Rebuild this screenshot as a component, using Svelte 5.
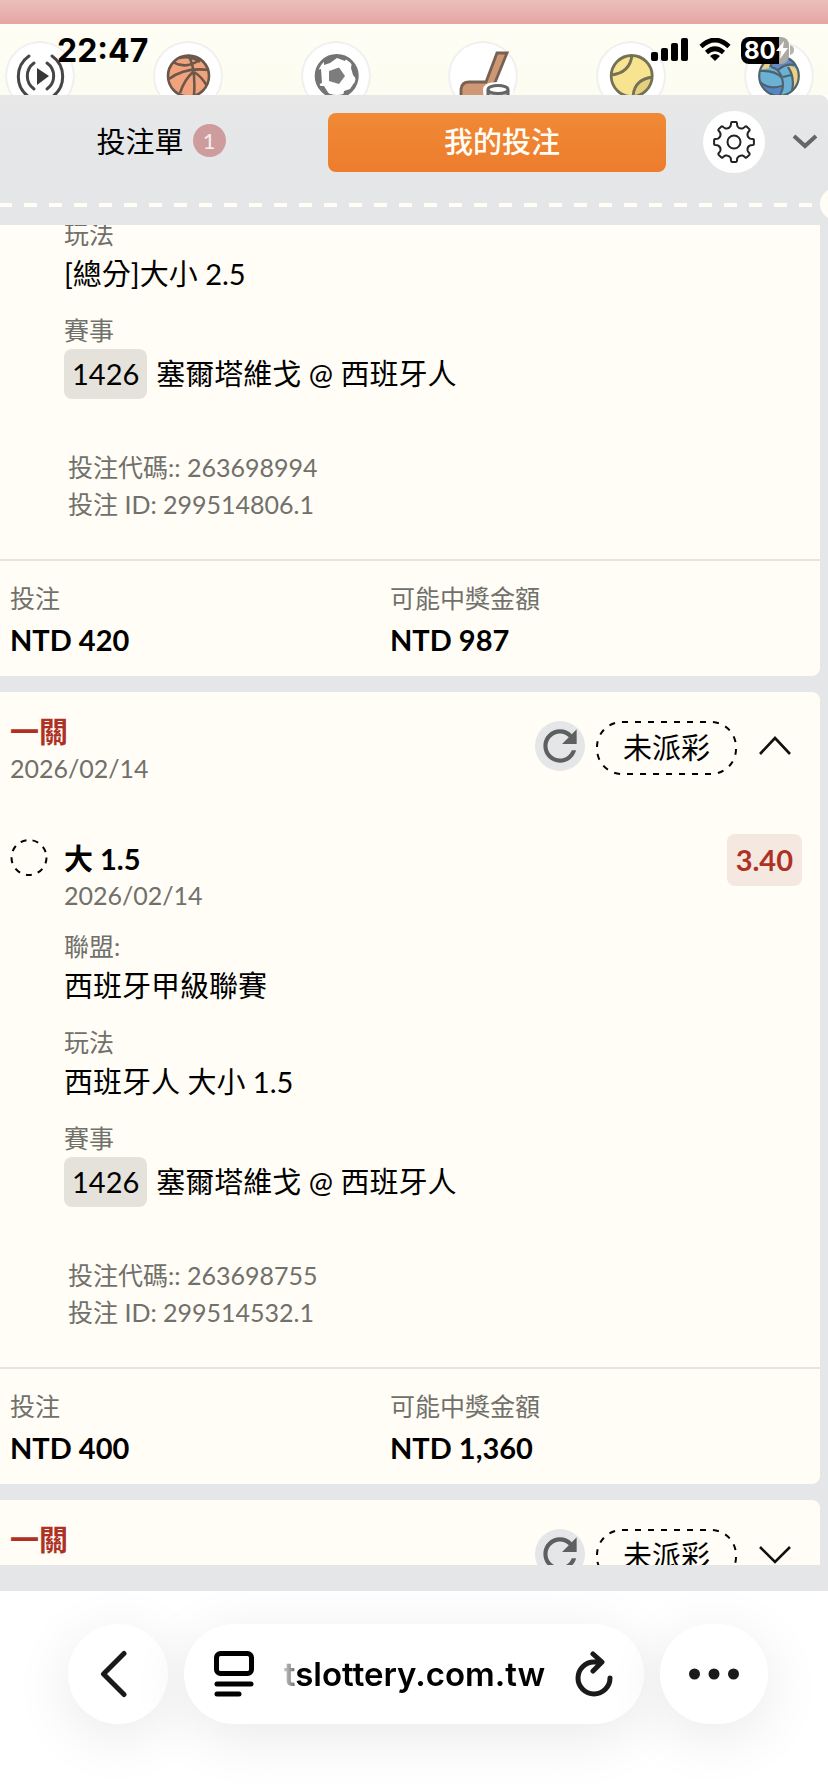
<script lang="ts">
	interface Field {
		label: string,
		value: string,
		code?: string,
	}

	interface Slip {
		title?: string,
		date?: string,
		open: boolean,
		pick?: { name: string, date: string, odds: string },
		fields: Field[],
		betCode?: string,
		betId?: string,
		stake?: string,
		payout?: string,
	}

	const sports = ['live', 'basketball', 'soccer', 'hockey', 'tennis', 'volleyball'];

	const slips: Slip[] = [
		{
			open: true,
			fields: [
				{ label: '玩法', value: '[總分]大小 2.5' },
				{ label: '賽事', value: '塞爾塔維戈 @ 西班牙人', code: '1426' },
			],
			betCode: '263698994',
			betId: '299514806.1',
			stake: 'NTD 420',
			payout: 'NTD 987',
		},
		{
			title: '一關',
			date: '2026/02/14',
			open: true,
			pick: { name: '大 1.5', date: '2026/02/14', odds: '3.40' },
			fields: [
				{ label: '聯盟:', value: '西班牙甲級聯賽' },
				{ label: '玩法', value: '西班牙人 大小 1.5' },
				{ label: '賽事', value: '塞爾塔維戈 @ 西班牙人', code: '1426' },
			],
			betCode: '263698755',
			betId: '299514532.1',
			stake: 'NTD 400',
			payout: 'NTD 1,360',
		},
		{ title: '一關', open: false, fields: [] },
	];

	// eight teeth around a 44px box
	const polar = (radius: number, degrees: number) => {
		const a = (degrees * Math.PI) / 180;
		return `${(22 + radius * Math.cos(a)).toFixed(2)} ${(22 + radius * Math.sin(a)).toFixed(2)}`;
	};
	const gearPath = Array.from({ length: 8 }, (_, i) => {
		const a = i * 45 - 90;
		return `${i ? 'L' : 'M'}${polar(16, a - 13)} Q${polar(17, a - 10)} ${polar(19, a - 9)} Q${polar(20, a - 8)} ${polar(20, a - 6)} L${polar(20, a + 6)} Q${polar(20, a + 8)} ${polar(19, a + 9)} Q${polar(17, a + 10)} ${polar(16, a + 13)} Q${polar(14, a + 22)} ${polar(16, a + 32)}`;
	}).join(' ') + 'Z';
</script>

<div class="app">
	<div class="banner"></div>

	<nav class="sports">
		{#each sports as sport (sport)}
			<a class="sport" href="#{sport}" aria-label={sport}>
				<svg viewBox="0 0 70 70" width="70" height="70" fill="none">
					{#if sport === 'live'}
						<g stroke="#333" stroke-width="3" stroke-linecap="round">
							<path d="M24 15a25 25 0 0 0 0 41M47 15a25 25 0 0 1 0 41" />
							<path d="M29 22a16 16 0 0 0 0 26M42 22a16 16 0 0 1 0 26" />
						</g>
						<path d="M32 27l12 8-12 9z" fill="#222" />
					{:else if sport === 'basketball'}
						<circle cx="35.5" cy="35" r="20.5" fill="#f09a70" />
						<g stroke="#5d4638" stroke-width="2.6">
							<circle cx="35.5" cy="35" r="20.5" />
							<path d="M16 38q16-12 40-9M35 14q8 12 6 41M41 30q-10 9-14 22M41 31q8 5 13 14M20 21q13 8 28-3M26 17q12-3 21 4" />
						</g>
					{:else if sport === 'soccer'}
						<circle cx="35.7" cy="35" r="20.5" fill="#fff" stroke="#666" stroke-width="3" />
						<path d="M28 30l10-3.500 6 8.500-6 8-10-3z" fill="#707070" />
						<path d="M23 19q12-8 23-3l-2 4-8-3-7 5-6 2zM15 29l5-1 1 14-5 2zM17 45l6 0 5 8 8 2v3q-12 0-19-13zM51 21l5 9 0 9-4-5-2-7zM53 42l2 3q-4 8-13 11l1-6 6-2z" fill="#666" />
					{:else if sport === 'hockey'}
						<path d="M49 12h10L44 49q-2 6-8 8H13v-9q1-7 8-7h17z" fill="#c98d67" stroke="#69503f" stroke-width="2.8" />
						<path d="M35 48q1-7 15-7t15 7v16H36z" fill="#fff" />
						<path d="M40 49v10h20V49" fill="#aaa" stroke="#555" stroke-width="3" />
						<ellipse cx="50" cy="48.500" rx="10" ry="4" fill="#fff" stroke="#555" stroke-width="3" />
					{:else if sport === 'tennis'}
						<circle cx="35.7" cy="35" r="20.5" fill="#f8e084" />
						<path d="M57 36q-18 2-20 20 16-1 20-20z" fill="#e3cc70" />
						<g stroke="#666243" stroke-width="2.800">
							<circle cx="35.7" cy="35" r="20.5" />
							<path d="M36 14q-2 18-21 20M57 36q-19 2-20 20" />
						</g>
					{:else}
						<circle cx="35" cy="35" r="19.5" fill="#5aa9cf" />
						<path d="M17 29q5-13 17-14-7 6-9 12z" fill="#edca79" />
						<path d="M26 25q5-10 12-10 12 1 15 10-10-4-19 5z" fill="#557fc4" />
						<path d="M44 25q9 0 11 8 0 11-6 16 1-14-5-24z" fill="#edca79" />
						<path d="M17 42q10 8 22 4l-2 9q-15 0-20-13z" fill="#4378bd" />
						<g stroke="#3d535f" stroke-width="2.200">
							<circle cx="35" cy="35" r="19.8" />
							<path d="M16 30q15-1 22 7M26 26q3-9 12-11M27 26q7 1 11 10M34 29q7-7 17-5M44 26q7 10 4 24M39 36l8-2M38 37q3 11-3 18M16 41q9 8 22 4" />
						</g>
					{/if}
				</svg>
			</a>
		{/each}
	</nav>

	<div class="status">
		<time>22:47</time>
		<div class="indicators">
			<svg width="38" height="24" viewBox="0 0 38 24">
				<rect x="0" y="14" width="7" height="9" rx="2" />
				<rect x="10" y="10" width="7" height="13" rx="2" />
				<rect x="20" y="5" width="7" height="18" rx="2" />
				<rect x="30" y="0" width="7" height="23" rx="2" />
			</svg>
			<svg width="32" height="24" viewBox="0 0 32 24">
				<path d="M2 8.500Q16-4.500 30 8.500M7.500 14.500q8.500-7.500 17 0" fill="none" stroke="#000" stroke-width="4.600" />
				<path d="M16 23l-5-5q5-4 10 0z" />
			</svg>
			<div class="battery">
				<div class="charge">
					<span>80</span>
					<svg width="12" height="20" viewBox="0 0 12 20"><path d="M8 1L0 11h5L4 19 12 8H7z" fill="#fff" /></svg>
				</div>
				<svg width="4" height="10" viewBox="0 0 4 10"><path d="M0 0q4 1 4 5t-4 5z" fill="#b5b4ae" /></svg>
			</div>
		</div>
	</div>

	<main class="sheet">
		<header class="tabs">
			<button class="tab">投注單 <span class="count">1</span></button>
			<button class="tab active">我的投注</button>
			<button class="gear" aria-label="設定">
				<svg width="44" height="44" viewBox="0 0 44 44" fill="none" stroke="#222" stroke-width="2">
					<path d={gearPath} />
					<circle cx="22" cy="22" r="6.500" />
				</svg>
			</button>
			<button class="fold" aria-label="收合">
				<svg width="26" height="16" viewBox="0 0 26 16" fill="none" stroke="#666" stroke-width="4"><path d="M2 2l11 10L24 2" /></svg>
			</button>
		</header>

		<div class="perforation"></div>

		<div class="list">
			{#each slips as slip, index (index)}
				<article class="card" class:cut={!slip.title}>
					{#if slip.title}
						<div class="card-head">
							<div>
								<h2>{slip.title}</h2>
								{#if slip.date}<p class="date">{slip.date}</p>{/if}
							</div>
							<div class="actions">
								<button class="refresh" aria-label="重新整理">
									<svg width="50" height="50" viewBox="0 0 24 24" fill="#5d5f61">
										<path d="M17.650 6.350C16.200 4.900 14.210 4 12 4c-4.420 0-7.990 3.580-7.990 8s3.570 8 7.990 8c3.730 0 6.840-2.550 7.730-6h-2.080c-.82 2.330-3.040 4-5.650 4-3.310 0-6-2.690-6-6s2.690-6 6-6c1.660 0 3.140.69 4.220 1.780L13 11h7V4l-2.350 2.350z" />
									</svg>
								</button>
								<span class="state">
									<svg class="outline" width="100%" height="100%"><rect x="1" y="1" rx="25" /></svg>
									未派彩
								</span>
								<button class="toggle" aria-label={slip.open ? '收起' : '展開'}>
									<svg width="34" height="20" viewBox="0 0 34 20" fill="none" stroke="#111" stroke-width="2.600">
										<path d={slip.open ? 'M2 18L17 2l15 16' : 'M2 3l15 15L32 3'} />
									</svg>
								</button>
							</div>
						</div>
					{/if}

					{#if slip.pick}
						<div class="pick">
							<svg class="pending" width="38" height="38" viewBox="0 0 38 38" fill="none">
								<circle cx="19" cy="17.500" r="17.500" stroke="#000" stroke-width="2" stroke-dasharray="6 6.220" />
							</svg>
							<div>
								<h3>{slip.pick.name}</h3>
								<p class="date">{slip.pick.date}</p>
							</div>
							<strong class="odds">{slip.pick.odds}</strong>
						</div>
					{/if}

					{#if slip.fields.length}
						<dl class="fields">
							{#each slip.fields as field}
								<div class="field">
									<dt>{field.label}</dt>
									{#if field.code}
										<dd class="match"><span class="code">{field.code}</span>{field.value}</dd>
									{:else}
										<dd>{field.value}</dd>
									{/if}
								</div>
							{/each}
						</dl>

						<div class="ids">
							<p>投注代碼:: {slip.betCode}</p>
							<p>投注 ID: {slip.betId}</p>
						</div>

						<dl class="totals">
							<div>
								<dt>投注</dt>
								<dd>{slip.stake}</dd>
							</div>
							<div>
								<dt>可能中獎金額</dt>
								<dd>{slip.payout}</dd>
							</div>
						</dl>
					{/if}
				</article>
			{/each}
		</div>
	</main>

	<footer class="browser">
		<button class="bubble back" aria-label="返回">
			<svg width="28" height="48" viewBox="0 0 28 48" fill="none" stroke="#1a1a1a" stroke-width="5" stroke-linecap="round" stroke-linejoin="round"><path d="M24 3.500L3.500 24 24 44.500" /></svg>
		</button>
		<div class="bubble address">
			<button aria-label="頁面選單">
				<svg width="40" height="46" viewBox="0 0 40 46" fill="none" stroke="#000" stroke-width="5">
					<rect x="2.500" y="2.500" width="35" height="20" rx="4" />
					<path d="M3 33h34M3 43h22" stroke-linecap="round" stroke-width="5" />
				</svg>
			</button>
			<span class="url">tslottery.com.tw</span>
			<button aria-label="重新載入">
				<svg width="38" height="46" viewBox="0 0 38 46" fill="none" stroke="#1a1a1a" stroke-width="5" stroke-linecap="round" stroke-linejoin="round">
					<path d="M35 27a16 16 0 1 1-16-16h7M18 3l9 8-9 9" />
				</svg>
			</button>
		</div>
		<button class="bubble more" aria-label="更多">
			<svg width="50" height="12" viewBox="0 0 50 12" fill="#1a1a1a"><circle cx="5.500" cy="6" r="5.500" /><circle cx="25" cy="6" r="5.500" /><circle cx="44.500" cy="6" r="5.500" /></svg>
		</button>
	</footer>
</div>

<style>
	:global(body) {
		background: #fff;
	}

	.app {
		position: relative;
		display: flex;
		flex-direction: column;
		height: 100vh;
		overflow: hidden;
		font-family: Lato, "Noto Sans CJK TC", sans-serif;
		font-size: 29px;
		color: #000;
	}

	button {
		display: flex;
		align-items: center;
		justify-content: center;
		padding: 0;
		border: 0;
		background: none;
		font: inherit;
		color: inherit;
	}

	svg {
		display: block;
		flex: none;
	}

	h2, h3, p, dl, dd {
		margin: 0;
	}

	.banner {
		flex: none;
		height: 24px;
		background: linear-gradient(#ebc0ba, #e6a5a3);
	}

	.sports {
		flex: none;
		display: flex;
		justify-content: space-between;
		height: 54px;
		padding: 17px 14px 0 5px;
		overflow: hidden;
		background: linear-gradient(#fffef6, #fdfcf0);
	}

	.sport {
		flex: none;
		height: 70px;
		border-radius: 50%;
		background: #fff;
		box-shadow: inset 0 0 0 2px #f0f0ee;
	}

	.sport svg {
		opacity: 0.9;
	}

	.status {
		position: absolute;
		top: 32px;
		left: 57px;
		right: 34px;
		display: flex;
		align-items: center;
		justify-content: space-between;
		height: 36px;
		font-family: Inter, sans-serif;
	}

	.status time {
		font-size: 32px;
		font-weight: 700;
	}

	.indicators {
		display: flex;
		align-items: center;
		gap: 10px;
	}

	.battery {
		display: flex;
		align-items: center;
		gap: 1px;
	}

	.charge {
		display: flex;
		align-items: center;
		width: 45px;
		height: 27px;
		padding-left: 3px;
		border-radius: 8px;
		background: linear-gradient(90deg, #000 38px, #aaa9a4 38px);
		color: #fff;
		font-size: 24px;
		font-weight: 700;
	}

	.sheet {
		position: relative;
		flex: 1;
		display: flex;
		flex-direction: column;
		min-height: 0;
		padding-bottom: 26px;
		overflow: hidden;
		border-top-right-radius: 8px;
		background: linear-gradient(#e8e8e8, #e4e6e8 60px);
	}

	.tabs {
		flex: none;
		display: grid;
		grid-template-columns: 33fr 34fr auto auto;
		align-items: center;
		height: 59px;
		padding: 16px 10px 0 0;
	}

	.tab {
		gap: 9px;
		height: 59px;
		padding: 0 6px 4px 0;
		border-radius: 8px;
	}

	.tab.active {
		padding: 0 0 4px 10px;
		background: linear-gradient(#f08936, #ed7d2e);
		color: #fffdf5;
		font-weight: 500;
	}

	.count {
		width: 33px;
		border-radius: 50%;
		background: #cf9c9d;
		color: #f5eeee;
		font-size: 22px;
		line-height: 33px;
	}

	.gear {
		width: 62px;
		height: 62px;
		margin: 0 27px 0 37px;
		border-radius: 50%;
		background: #fff;
	}

	.perforation {
		flex: none;
		height: 4px;
		margin: 33px 14px 18px 0;
		background: repeating-linear-gradient(90deg, #fffdf5 0 12px, transparent 12px 24px, #fffdf5 24px 25px);
	}

	.perforation::after {
		content: "";
		position: absolute;
		top: 93px;
		right: -24px;
		width: 32px;
		height: 32px;
		border-radius: 50%;
		background: #fffdf5;
	}

	.list {
		flex: 1;
		display: flex;
		flex-direction: column;
		gap: 16px;
		min-height: 0;
		padding-right: 8px;
		overflow: hidden;
	}

	.card {
		flex: none;
		padding-top: 21px;
		border-radius: 0 8px 8px 0;
		background: #fffdf5;
	}

	/* first slip is scrolled partly under the tabs */
	.card.cut {
		margin-top: -8px;
		padding-top: 0;
	}

	.card:last-child {
		padding-bottom: 40px;
	}

	.card-head {
		display: flex;
		justify-content: space-between;
		padding: 0 18px 0 10px;
	}

	h2, h3 {
		font-size: 29px;
		font-weight: 700;
		line-height: 38px;
	}

	h2 {
		color: #ad3225;
	}

	.date {
		color: #70706c;
		font-size: 25px;
		line-height: 35px;
	}

	.actions {
		display: flex;
		align-items: flex-start;
		gap: 11px;
		margin-top: 8px;
	}

	.refresh {
		border-radius: 50%;
		background: #e4e6e8;
	}

	.state {
		position: relative;
		width: 141px;
		line-height: 54px;
		text-align: center;
	}

	.outline {
		position: absolute;
		inset: 0;
	}

	.outline rect {
		width: calc(100% - 2px);
		height: calc(100% - 2px);
		fill: none;
		stroke: #000;
		stroke-width: 2px;
		stroke-dasharray: 6 7;
	}

	.toggle {
		width: 54px;
		height: 50px;
	}

	.pick {
		display: flex;
		align-items: flex-start;
		gap: 16px;
		margin-top: 54px;
		padding: 0 18px 0 10px;
	}

	.pending {
		overflow: visible;
	}

	.odds {
		margin: -6px 0 0 auto;
		padding: 0 9px;
		border-radius: 8px;
		background: #f5e8e0;
		color: #ad3225;
		line-height: 52px;
	}

	.fields {
		display: flex;
		flex-direction: column;
		gap: 16px;
		padding: 0 18px 0 64px;
	}

	.pick + .fields {
		margin-top: 16px;
	}

	dt {
		color: #70706c;
		font-size: 25px;
		line-height: 34px;
	}

	dd {
		line-height: 46px;
	}

	.match {
		display: flex;
		align-items: center;
		gap: 9px;
		height: 54px;
	}

	.code {
		padding: 0 8px;
		border-radius: 8px;
		background: #e5e2dc;
		line-height: 50px;
	}

	.ids {
		margin-top: 48px;
		padding: 0 18px 36px 68px;
		color: #70706c;
		font-size: 25px;
		line-height: 37px;
	}

	.totals {
		display: grid;
		grid-template-columns: 1fr 1fr;
		padding: 20px 50px 13px 10px;
		border-top: 2px solid #e5e5e0;
	}

	.totals dt {
		margin-bottom: 2px;
	}

	.totals dd {
		font-weight: 700;
	}

	.browser {
		flex: none;
		display: flex;
		gap: 16px;
		height: 168px;
		padding: 33px 60px 0 68px;
		background: #fff;
	}

	.bubble {
		height: 100px;
		border-radius: 50px;
		background: #fff;
		box-shadow: 0 12px 60px rgba(0, 0, 0, 0.09);
	}

	.back {
		width: 100px;
		padding-right: 8px;
	}

	.more {
		width: 108px;
	}

	.address {
		flex: 1;
		display: flex;
		align-items: center;
		justify-content: space-between;
		padding: 0 31px 0 30px;
	}

	.url {
		font-family: Inter, sans-serif;
		font-size: 33px;
		font-weight: 600;
		background: linear-gradient(90deg, #ccc, #777 10px, #000 12px);
		background-clip: text;
		color: transparent;
	}
</style>
